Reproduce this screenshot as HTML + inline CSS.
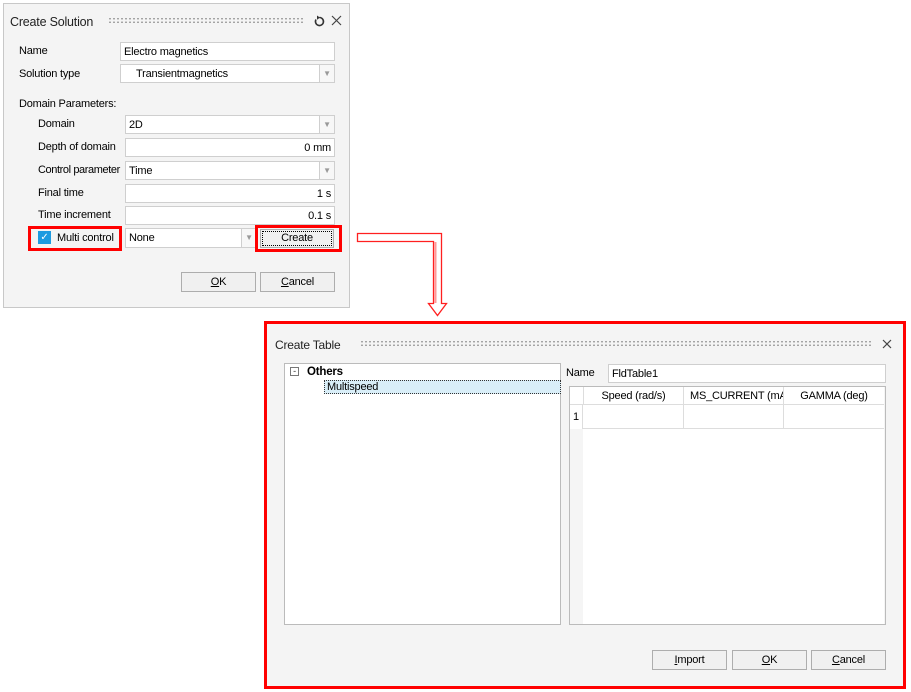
<!DOCTYPE html>
<html><head><style>
*{box-sizing:border-box;margin:0;padding:0}
body{width:911px;height:692px;background:#fff;position:relative;font-family:"Liberation Sans",sans-serif;font-size:11px;letter-spacing:-0.2px;color:#000;overflow:hidden}
.a{position:absolute}
.inp{position:absolute;background:#fff;border:1px solid #cfcfcf;height:19px;line-height:18px;padding:0 3px;white-space:nowrap;overflow:hidden}
.cb{position:absolute;width:16px;top:-1px;bottom:-1px;right:-1px;border:1px solid #cfcfcf;background:#f7f7f7;color:#999;font-size:8px;text-align:center;line-height:17px}
.btn{position:absolute;background:#f0f0f0;border:1px solid #adadad;height:20px;line-height:19px;text-align:center}
.dots{position:absolute;height:7px;background-image:radial-gradient(circle,#999 0.8px,transparent 1px);background-size:4px 3.5px}
.red{position:absolute;border:3px solid #f00}
</style></head><body>
<div class="a" style="left:3px;top:3px;width:347px;height:305px;border:1px solid #c8c8c8;background:#f4f4f4"></div>
<div class="a" style="left:10px;top:15px;font-size:12.5px;color:#222">Create Solution</div>
<div class="dots" style="left:108px;top:17px;width:196px"></div>
<svg class="a" style="left:313px;top:15px" width="13" height="13" viewBox="0 0 13 13"><path d="M3 4.5A4 4 0 1 0 6.5 2.5" fill="none" stroke="#333" stroke-width="1.6"/><path d="M4 0.5L7 2.6L4 4.8Z" fill="#333"/></svg>
<svg class="a" style="left:331px;top:15px" width="11" height="11"><path d="M1 1L10 10M10 1L1 10" stroke="#444" stroke-width="1.2"/></svg>
<div class="a" style="left:19px;top:45px">Name</div>
<div class="inp" style="left:120px;top:42px;width:215px">Electro magnetics</div>
<div class="a" style="left:19px;top:68px">Solution type</div>
<div class="inp" style="left:120px;top:64px;width:215px;padding-left:15px">Transientmagnetics<div class="cb">▼</div></div>
<div class="a" style="left:19px;top:98px">Domain Parameters:</div>
<div class="a" style="left:38px;top:118px">Domain</div>
<div class="inp" style="left:125px;top:115px;width:210px">2D<div class="cb">▼</div></div>
<div class="a" style="left:38px;top:141px">Depth of domain</div>
<div class="inp" style="left:125px;top:138px;width:210px;text-align:right">0 mm</div>
<div class="a" style="left:38px;top:164px;letter-spacing:-0.4px">Control parameter</div>
<div class="inp" style="left:125px;top:161px;width:210px">Time<div class="cb">▼</div></div>
<div class="a" style="left:38px;top:187px">Final time</div>
<div class="inp" style="left:125px;top:184px;width:210px;text-align:right">1 s</div>
<div class="a" style="left:38px;top:209px">Time increment</div>
<div class="inp" style="left:125px;top:206px;width:210px;text-align:right">0.1 s</div>
<div class="red" style="left:28px;top:226px;width:94px;height:25px"></div>
<div class="a" style="left:38px;top:231px;width:13px;height:13px;background:#1e9be0;color:#fff;font-size:10px;text-align:center;line-height:13px">✓</div>
<div class="a" style="left:57px;top:232px">Multi control</div>
<div class="inp" style="left:125px;top:228px;width:132px;height:20px;line-height:19px">None<div class="cb" style="line-height:18px">▼</div></div>
<div class="red" style="left:255px;top:225px;width:87px;height:27px"></div>
<div class="btn" style="left:260px;top:229px;width:74px;height:19px;line-height:17px;outline:1px dotted #000;outline-offset:-3px">Create</div>
<div class="btn" style="left:181px;top:272px;width:75px"><u>O</u>K</div>
<div class="btn" style="left:260px;top:272px;width:75px"><u>C</u>ancel</div>
<svg class="a" style="left:350px;top:225px" width="110" height="95"><path d="M7.5 8.5H91.5V78.5H96.5L87.5 90.5L78.5 78.5H83.5V16.5H7.5Z" fill="#fff" stroke="#ff2020" stroke-width="1.3"/><path d="M85.5 17V78" stroke="#f99" stroke-width="2"/></svg>
<div class="a" style="left:264px;top:321px;width:642px;height:368px;border:3px solid #f00;background:#f4f4f4"></div>
<div class="a" style="left:275px;top:338px;font-size:12px;color:#222">Create Table</div>
<div class="dots" style="left:360px;top:340px;width:512px"></div>
<svg class="a" style="left:882px;top:339px" width="10" height="10"><path d="M1 1L9 9M9 1L1 9" stroke="#444" stroke-width="1.2"/></svg>
<div class="a" style="left:284px;top:363px;width:277px;height:262px;background:#fff;border:1px solid #bbb"></div>
<div class="a" style="left:290px;top:367px;width:9px;height:9px;border:1px solid #777;font-size:9px;line-height:6px;text-align:center;color:#333">-</div>
<div class="a" style="left:307px;top:366px;font-weight:bold;font-size:11.5px">Others</div>
<div class="a" style="left:324px;top:380px;width:237px;height:14px;background:#d9eef8;border:1px dotted #333;padding-left:2px;line-height:12px">Multispeed</div>
<div class="a" style="left:566px;top:367px">Name</div>
<div class="inp" style="left:608px;top:364px;width:278px">FldTable1</div>
<div class="a" style="left:569px;top:386px;width:317px;height:239px;background:#f5f5f5;border:1px solid #bbb"></div>
<div class="a" style="left:583px;top:405px;width:301px;height:219px;background:#fff"></div>
<div class="a" style="left:570px;top:387px;width:314px;height:18px;background:#fff;border-bottom:1px solid #ddd"></div>
<div class="a" style="left:583px;top:387px;width:100px;text-align:center;line-height:18px;border-left:1px solid #ddd">Speed (rad/s)</div>
<div class="a" style="left:683px;top:387px;width:100px;line-height:18px;border-left:1px solid #ddd;padding-left:6px;overflow:hidden;white-space:nowrap">MS_CURRENT (mA</div>
<div class="a" style="left:783px;top:387px;width:101px;text-align:center;line-height:18px;border-left:1px solid #ddd">GAMMA (deg)</div>
<div class="a" style="left:570px;top:405px;width:13px;height:24px;background:#fff;border-right:1px solid #ddd;line-height:24px;padding-left:3px">1</div>
<div class="a" style="left:583px;top:405px;width:301px;height:24px;border-bottom:1px solid #ddd"></div>
<div class="a" style="left:683px;top:405px;width:1px;height:24px;background:#ddd"></div>
<div class="a" style="left:783px;top:405px;width:1px;height:24px;background:#ddd"></div>
<div class="btn" style="left:652px;top:650px;width:75px"><u>I</u>mport</div>
<div class="btn" style="left:732px;top:650px;width:75px"><u>O</u>K</div>
<div class="btn" style="left:811px;top:650px;width:75px"><u>C</u>ancel</div>
</body></html>
